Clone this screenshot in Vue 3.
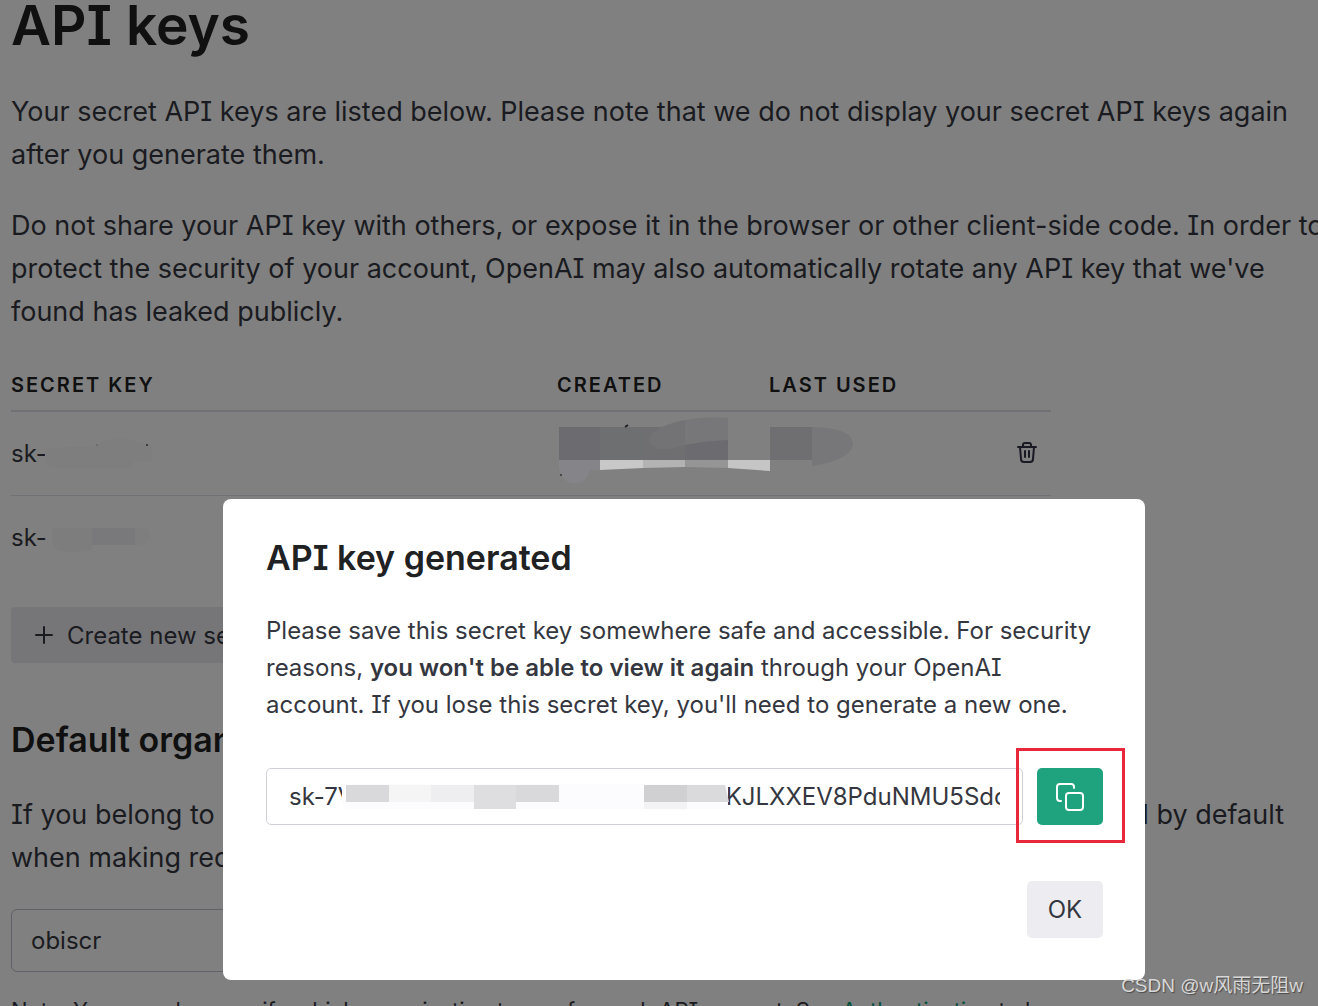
<script setup>
import { ref } from 'vue'

const secretKey = ref('sk-7V' + ' '.repeat(55) + 'KJLXXEV8PduNMU5SdoA')
const organization = ref('obiscr')
</script>

<template>
  <div class="screen">
    <main class="page">
      <h1>API keys</h1>
      <p>
        Your secret API keys are listed below. Please note that we do not display your secret API keys again<br />
        after you generate them.
      </p>
      <p>
        Do not share your API key with others, or expose it in the browser or other client-side code. In order to<br />
        protect the security of your account, OpenAI may also automatically rotate any API key that we've<br />
        found has leaked publicly.
      </p>

      <table class="keys">
        <thead>
          <tr>
            <th class="col-key">Secret key</th>
            <th class="col-created">Created</th>
            <th class="col-used">Last used</th>
            <th class="col-action"></th>
          </tr>
        </thead>
        <tbody>
          <tr>
            <td>
              sk-
              <svg class="mask" width="160" height="83" viewBox="0 0 160 83" aria-hidden="true">
                <path d="M34 36 L84 34 Q108 20 124 30 L141 34 V49 L122 50 V56 H42 Q34 54 34 46Z" fill="#7e7e7f" />
                <circle cx="136" cy="33" r="1" fill="#28282c" />
                <circle cx="86" cy="33" r="1" fill="#69696c" />
              </svg>
            </td>
            <td>
              <svg class="mask" width="300" height="83" viewBox="0 0 300 83" aria-hidden="true">
                <rect x="2" y="15" width="42" height="33" fill="#6b6b70" />
                <rect x="43" y="15" width="43" height="33" fill="#6e6f70" />
                <rect x="86" y="15" width="42" height="33" fill="#6f6f72" />
                <rect x="128" y="20" width="43" height="28" fill="#6b6b70" />
                <path d="M94 22 Q104 13 128 8 V33 Q114 38 102 37 Q88 33 94 22Z" fill="#737376" />
                <path d="M128 8 Q148 4 171 6 V28 Q148 29 128 33Z" fill="#777779" />
                <path d="M2 48 H43 V58 H33 Q30 70 20 71 Q8 72 4 62 L2 56Z" fill="#858589" />
                <path d="M43 48 H86 V56 L43 58Z" fill="#c8c8c8" />
                <path d="M86 48 H128 V55 L86 56Z" fill="#b3b3b3" />
                <path d="M128 48 H171 V56 L128 55Z" fill="#959595" />
                <path d="M171 48 H213 V59 L171 56Z" fill="#c5c5c5" />
                <rect x="213" y="15" width="42" height="33" fill="#6f6f72" />
                <path d="M255 15 Q296 16 296 32 Q294 48 255 54Z" fill="#777779" />
                <path d="M68 15 L71 13" stroke="#222226" stroke-width="2" />
                <circle cx="4" cy="63" r="1" fill="#37373b" />
              </svg>
            </td>
            <td></td>
            <td>
              <button class="trash" type="button" aria-label="Delete key">
                <svg width="20" height="24" viewBox="0 0 20 24" fill="none" stroke="#191924" stroke-width="2" stroke-linecap="round" stroke-linejoin="round">
                  <path d="M1 6H19M3 6L4 18Q4 21 7 21H13Q16 21 16 18L17 6M6 6V4Q6 2 8 2H12Q14 2 14 4V6M8 10V16M12 10V16" />
                </svg>
              </button>
            </td>
          </tr>
          <tr>
            <td>
              sk-
              <svg class="mask" width="160" height="83" viewBox="0 0 160 83" aria-hidden="true">
                <path d="M42 32 H81 V54 Q66 58 46 54 Q38 44 42 32Z" fill="#7d7d7e" />
                <path d="M123 32 Q140 30 140 40 Q138 50 123 49Z" fill="#7e7e7f" />
                <rect x="81" y="32" width="43" height="17" fill="#79797b" />
              </svg>
            </td>
            <td></td>
            <td></td>
            <td></td>
          </tr>
        </tbody>
      </table>

      <button class="create" type="button">
        <svg width="18" height="18" viewBox="0 0 18 18" stroke="#1a1b20" stroke-width="2" stroke-linecap="round">
          <path d="M9 1V17M1 9H17" />
        </svg>
        Create new secret key
      </button>

      <h2>Default organization</h2>
      <p class="org-text">
        <span>If you belong to multiple organizations, this setting controls which organization is</span>
        <span>used by default</span>
      </p>
      <p class="org-text second">when making requests with the API keys above.</p>
      <select v-model="organization" class="org" aria-label="Default organization">
        <option>obiscr</option>
      </select>
      <p class="note">
        Note: You can also specify which organization to use for each API request. See
        <a href="#authentication">Authentication</a> to learn more.
      </p>
    </main>

    <div class="layer">
      <section class="modal" role="dialog" aria-modal="true" aria-labelledby="dialog-title">
        <h2 id="dialog-title">API key generated</h2>
        <p>
          Please save this secret key somewhere safe and accessible. For security<br />
          reasons, <strong>you won't be able to view it again</strong> through your OpenAI<br />
          account. If you lose this secret key, you'll need to generate a new one.
        </p>
        <div class="key-row">
          <div class="key-field">
            <input v-model="secretKey" type="text" readonly aria-label="Secret key" />
            <svg class="mask" width="470" height="57" viewBox="0 0 470 57" aria-hidden="true">
              <path d="M76 16H462V41H84Q76 41 76 34Z" fill="#fcfcfe" />
              <rect x="80" y="17" width="43" height="17" fill="#d9d9dc" />
              <rect x="123" y="17" width="42" height="17" fill="#f5f5f6" />
              <rect x="165" y="17" width="43" height="17" fill="#eeeef0" />
              <rect x="208" y="17" width="42" height="24" fill="#dedee1" />
              <rect x="250" y="17" width="43" height="17" fill="#d9d9dc" />
              <rect x="378" y="17" width="43" height="17" fill="#d0d0d2" />
              <rect x="378" y="34" width="43" height="7" fill="#f3f3f5" />
              <path d="M421 17H459L463 34H421Z" fill="#dadadd" />
            </svg>
          </div>
          <div class="marked">
            <button class="copy" type="button" aria-label="Copy key">
              <svg width="30" height="30" viewBox="0 0 30 30" fill="none" stroke="#fff" stroke-width="2" stroke-linecap="round" stroke-linejoin="round">
                <path d="M6 19H5Q2 19 2 16V5Q2 2 5 2H16Q19 2 19 5V6" />
                <rect x="11" y="11" width="17" height="17" rx="3" />
              </svg>
            </button>
          </div>
        </div>
        <div class="actions"><button class="ok" type="button">OK</button></div>
      </section>
    </div>

    <div class="watermark">CSDN @w风雨无阻w</div>
  </div>
</template>

<style>
body {
  margin: 0;
  background: #808080;
}
</style>

<style scoped>
* {
  box-sizing: border-box;
}

.screen {
  height: 100vh;
  overflow: hidden;
  position: relative;
  background: #808080;
  font-family: Inter, Roboto, "Liberation Sans", sans-serif;
  font-feature-settings: "cv08";
  color: #1a1b20;
}

button,
input,
select {
  font: inherit;
  font-feature-settings: inherit;
  color: inherit;
}

.page {
  padding-left: 11px;
  white-space: nowrap;
  font-size: 27px;
  line-height: 43px;
}

h1 {
  margin: 0 0 40px;
  font-size: 55px;
  line-height: 50px;
  font-weight: 600;
  color: #101011;
}

h2 {
  margin: 0;
  font-size: 34px;
  line-height: 40px;
  font-weight: 600;
  color: #101011;
}

p {
  margin: 0 0 28px;
}

.keys {
  width: 1040px;
  table-layout: fixed;
  border-collapse: collapse;
  font-size: 24px;
}

th {
  height: 50px;
  padding: 0;
  text-align: left;
  font-size: 20px;
  font-weight: 600;
  letter-spacing: 2px;
  text-transform: uppercase;
  color: #101011;
  border-bottom: 2px solid #717175;
}

td {
  position: relative;
  height: 84px;
  padding: 0;
}

tbody tr:first-child td {
  border-bottom: 1px solid #717175;
}

.col-key {
  width: 546px;
}

.col-created {
  width: 212px;
}

.col-used {
  width: 234px;
}

.mask {
  position: absolute;
  top: 0;
  left: 0;
  pointer-events: none;
}

.trash {
  display: flex;
  padding: 0 14px;
  border: 0;
  background: none;
}

.create {
  display: flex;
  align-items: center;
  gap: 14px;
  height: 56px;
  margin: 28px 0 57px;
  padding: 0 24px;
  border: 0;
  border-radius: 4px;
  background: #767679;
  font-size: 24px;
}

.org-text {
  display: flex;
  justify-content: space-between;
  margin: 33px 34px 0 0;
}

.org-text.second {
  margin: 0 0 30px;
}

.org {
  display: block;
  appearance: none;
  width: 520px;
  height: 63px;
  padding: 0 19px;
  border: 1px solid #606067;
  border-radius: 6px;
  background: transparent;
  font-size: 24px;
}

.note {
  margin: 22px 0 0;
  font-size: 22px;
  line-height: 32px;
}

.note a {
  color: #08513f;
  text-decoration: none;
}

.layer {
  position: absolute;
  inset: 0;
  display: flex;
  align-items: flex-end;
  justify-content: center;
  padding: 0 0 26px 50px;
}

.modal {
  width: 922px;
  padding: 39px 42px 42px 43px;
  border-radius: 8px;
  background: #fff;
  color: #353740;
  font-size: 24px;
  line-height: 37px;
  white-space: nowrap;
}

.modal h2 {
  margin-bottom: 34px;
  color: #202123;
}

.modal p {
  margin-bottom: 45px;
}

.modal strong {
  font-weight: 600;
}

.key-row {
  display: flex;
  gap: 14px;
}

.key-field {
  position: relative;
  flex: 1;
}

.key-field input {
  display: block;
  width: 100%;
  height: 57px;
  padding: 0 22px;
  border: 1px solid #d0d0d8;
  border-radius: 5px;
  background: #fff;
  outline: none;
}

.marked {
  position: relative;
}

.marked::after {
  content: "";
  position: absolute;
  inset: -20px -22px -18px -21px;
  border: 3px solid #e8283a;
  pointer-events: none;
}

.copy {
  display: flex;
  align-items: center;
  justify-content: center;
  width: 66px;
  height: 57px;
  padding: 0;
  border: 0;
  border-radius: 5px;
  background: #1fa37f;
}

.actions {
  display: flex;
  justify-content: flex-end;
  margin-top: 56px;
}

.ok {
  width: 76px;
  height: 57px;
  padding: 0;
  border: 0;
  border-radius: 5px;
  background: #ececf1;
}

.watermark {
  position: absolute;
  right: 15px;
  bottom: 6px;
  font-family: "Liberation Sans", "Noto Sans CJK SC", sans-serif;
  font-size: 19px;
  line-height: 28px;
  color: #d8d8d8;
  text-shadow: 1px 1px 1px #4a4a4a;
}
</style>
